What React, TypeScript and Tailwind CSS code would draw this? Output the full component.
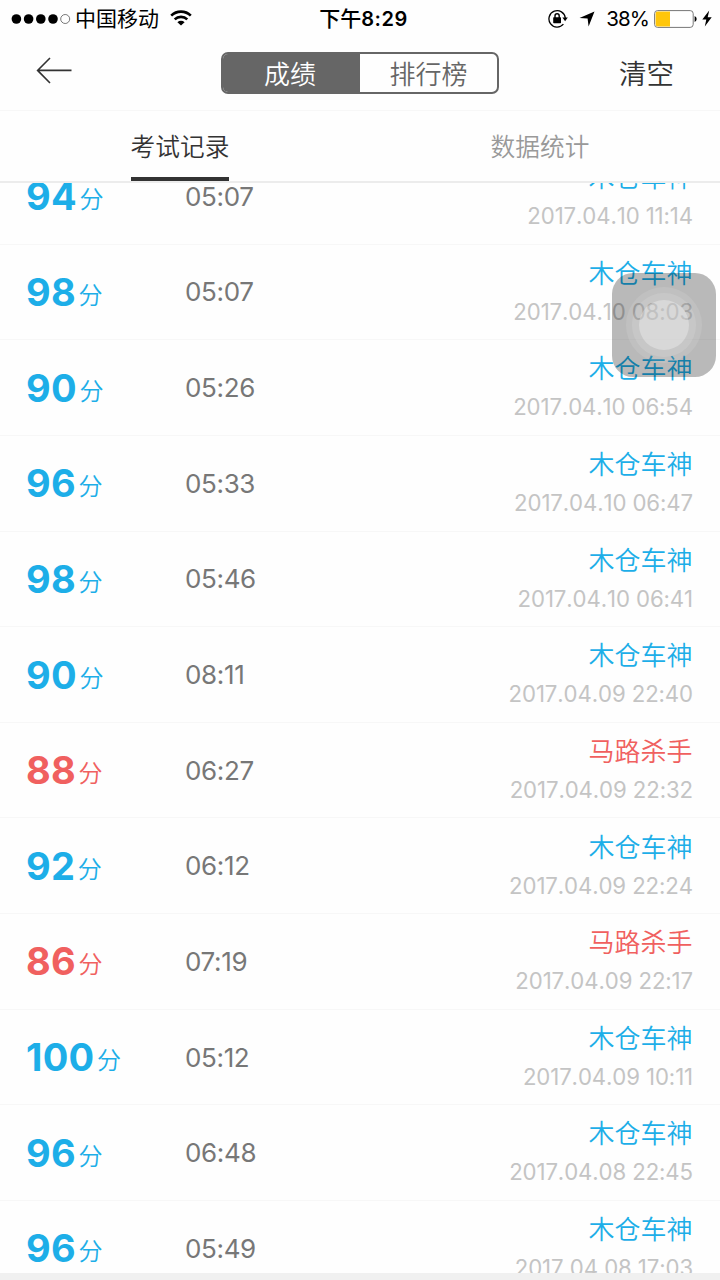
import clsx from 'clsx';

interface ExamRecord {
  score: number;
  time: string;
  date: string;
}

const PASS_SCORE = 90;

const records: ExamRecord[] = [
  { score: 94, time: '05:07', date: '2017.04.10 11:14' },
  { score: 98, time: '05:07', date: '2017.04.10 08:03' },
  { score: 90, time: '05:26', date: '2017.04.10 06:54' },
  { score: 96, time: '05:33', date: '2017.04.10 06:47' },
  { score: 98, time: '05:46', date: '2017.04.10 06:41' },
  { score: 90, time: '08:11', date: '2017.04.09 22:40' },
  { score: 88, time: '06:27', date: '2017.04.09 22:32' },
  { score: 92, time: '06:12', date: '2017.04.09 22:24' },
  { score: 86, time: '07:19', date: '2017.04.09 22:17' },
  { score: 100, time: '05:12', date: '2017.04.09 10:11' },
  { score: 96, time: '06:48', date: '2017.04.08 22:45' },
  { score: 96, time: '05:49', date: '2017.04.08 17:03' },
];

function StatusBar() {
  return (
    <div className="grid h-9 shrink-0 grid-cols-3 items-center text-black">
      <div className="flex items-center pl-[11px]">
        <svg width="60" height="12" viewBox="0 0 60 12">
          <circle cx="5.4" cy="6" r="4.8" />
          <circle cx="17.6" cy="6" r="4.8" />
          <circle cx="29.8" cy="6" r="4.8" />
          <circle cx="42" cy="6" r="4.8" />
          <circle cx="54.2" cy="6" r="4.5" fill="none" stroke="#555" strokeWidth="0.8" />
        </svg>
        <span className="ml-[4px] pt-px text-[21px] leading-9">中国移动</span>
        <svg className="mb-[2px] ml-[11px]" width="22" height="16" viewBox="0 0 22 16" fill="none" stroke="#000" strokeWidth="2.6">
          <path d="M1.2 5.6a14 14 0 0 1 19.6 0" />
          <path d="M4.7 9.4a9 9 0 0 1 12.6 0" />
          <path d="M11 15.6L7.4 12.2a5.2 5.2 0 0 1 7.2 0z" fill="#000" stroke="none" />
        </svg>
      </div>
      <div className="pt-px pl-[7px] text-center text-[21px] leading-9 font-medium">
        下午<span className="text-[20px] font-semibold tracking-[0.5px]">8:29</span>
      </div>
      <div className="flex items-center justify-end pr-[8px]">
        <svg width="20" height="20" viewBox="0 0 20 20" fill="none" stroke="#000">
          <path d="M15.4 15.2A8.2 8.2 0 1 1 17.3 9" strokeWidth="1.3" />
          <path d="M14.4 8.6h5.4l-2.7 3.6z" fill="#000" stroke="none" />
          <rect x="5.2" y="8.2" width="7.8" height="6" rx="0.6" fill="#000" stroke="none" />
          <path d="M7 9V6.9a2.1 2.1 0 0 1 4.2 0V9" strokeWidth="1.4" />
        </svg>
        <svg className="ml-[11px]" width="16" height="16" viewBox="0 0 16 16">
          <path d="M15.5 0.5L9.6 15.4 8.6 7.6 0.5 6.9z" />
        </svg>
        <span className="ml-[11px] pt-px text-[20.5px] leading-9 tracking-[-0.9px]">38%</span>
        <svg className="ml-[5px]" width="44" height="18" viewBox="0 0 44 18">
          <rect x="0.6" y="0.6" width="38.6" height="16.8" rx="3" fill="#fff" stroke="#777" strokeWidth="1" />
          <path d="M3.4 1.6H16v14.8H3.4a1.8 1.8 0 0 1-1.8-1.8V3.4a1.8 1.8 0 0 1 1.8-1.8z" fill="#ffc60a" />
          <path d="M40.6 6a3.2 3.2 0 0 1 0 6z" />
        </svg>
        <svg className="ml-[4px]" width="10" height="17" viewBox="0 0 10 17">
          <path d="M7.2 0.5L0.3 9.4h4L2.8 16.5 9.7 7.2h-4z" />
        </svg>
      </div>
    </div>
  );
}

function NavBar() {
  return (
    <div className="flex h-[75px] shrink-0 items-start border-b border-[#f7f7f7] pr-[46px] pl-[36px]">
      <svg className="mt-[21px]" width="36" height="27" viewBox="0 0 36 27" fill="none" stroke="#333" strokeWidth="1.6">
        <path d="M14 1L1.6 13.4 14 26M1.6 13.4H35.5" />
      </svg>
      <div className="mt-4 ml-[149px] flex h-[42px] w-[278px] overflow-hidden rounded-[7px] border-2 border-[#666] text-[26px] leading-[41px] font-[350]">
        <div className="w-[137px] bg-[#666] pr-[3px] text-center text-white">成绩</div>
        <div className="flex-1 text-center text-[#666]">排行榜</div>
      </div>
      <div className="mt-[17px] ml-auto text-[27.5px] leading-[42px] font-[350] text-[#333]">清空</div>
    </div>
  );
}

function Tabs() {
  return (
    <div className="grid h-[72px] shrink-0 grid-cols-2 border-b-2 border-[#ececec] text-[24.7px] leading-[73px] font-[350]">
      <div className="flex justify-center text-[#333]">
        <div className="h-[70px] border-b-4 border-[#333]">考试记录</div>
      </div>
      <div className="text-center text-[#999]">数据统计</div>
    </div>
  );
}

function RecordRow({ score, time, date }: ExamRecord) {
  const passed = score >= PASS_SCORE;
  const color = passed ? 'text-[#1daee8]' : 'text-[#f0605f]';

  return (
    <div className="flex h-[95.65px] items-center border-b border-[#f7f7f7] pr-[27px] pl-[26px]">
      <div className={clsx('flex w-[159px] items-baseline pt-[6px] leading-[46px]', color)}>
        <span className="text-[38px] font-bold tracking-[0.3px]">{score}</span>
        <span className="ml-[2.5px] -translate-y-[2px] text-[24px] font-[350]">分</span>
      </div>
      <div className="text-[26px] tracking-[-0.35px] text-[#777]">{time}</div>
      <div className="flex flex-1 flex-col items-end pt-[0.5px]">
        <div className={clsx('pr-[0.5px] text-[26px] leading-[38px] font-[350]', color)}>{passed ? '木仓车神' : '马路杀手'}</div>
        <div className="text-[22.2px] leading-[37px] tracking-[-0.1px] [font-kerning:none] text-[#c4c4c4]">{date}</div>
      </div>
    </div>
  );
}

function AssistiveTouch() {
  return (
    <div className="absolute top-[273px] left-[612px] flex size-[104px] items-center justify-center rounded-[21px] bg-black/27">
      <div className="flex size-[76px] items-center justify-center rounded-full bg-white/10">
        <div className="flex size-[64px] items-center justify-center rounded-full bg-white/12">
          <div className="size-[50px] rounded-full bg-white/30" />
        </div>
      </div>
    </div>
  );
}

export default function App() {
  return (
    <main className="relative flex h-[1280px] w-[720px] flex-col overflow-hidden bg-[#fefefe] font-['Inter','Noto_Sans_CJK_SC',sans-serif]">
      <StatusBar />
      <NavBar />
      <Tabs />
      <div className="h-[1090px] shrink-0 overflow-hidden">
        <div className="-mt-[34px]">
          {records.map((record) => (
            <RecordRow key={record.date} {...record} />
          ))}
        </div>
      </div>
      <div className="flex-1 bg-[#f0f0f0]" />
      <AssistiveTouch />
    </main>
  );
}
